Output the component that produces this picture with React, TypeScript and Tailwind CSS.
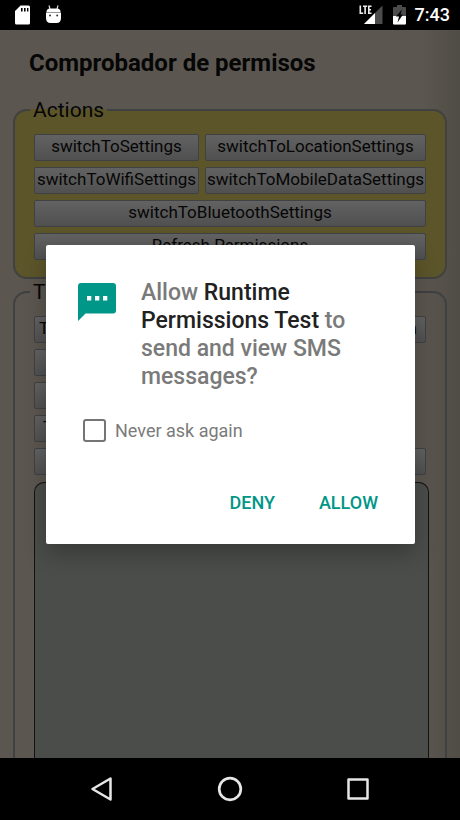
import type { ReactNode } from "react";

function PageButton({
  children,
  label,
  className = "justify-center",
}: {
  children?: ReactNode;
  label?: string;
  className?: string;
}) {
  return (
    <button
      type="button"
      aria-label={label}
      className={`flex h-[27px] items-center overflow-hidden whitespace-nowrap rounded-[2px] border border-[#404144] bg-linear-to-b from-[#626262] to-[#505050] pb-[3px] text-[17px] leading-5 ${className}`}
    >
      {children}
    </button>
  );
}

function StatusBar() {
  return (
    <header className="flex h-[30px] shrink-0 items-center justify-between bg-black pr-[10px] pl-[15px] text-white">
      <div className="flex items-center gap-4">
        <svg width="15" height="20" viewBox="0 0 15 20" aria-label="SD card">
          <path
            fill="#fff"
            fillRule="evenodd"
            d="M5.500 .500H13.500Q15 .500 15 2V18Q15 19.500 13.500 19.500H1.500Q0 19.500 0 18V6ZM6 3V6.500H7.600V3ZM9 3V6.500H10.600V3ZM12 3V6.500H13.400V3Z"
          />
        </svg>
        <svg width="15" height="20" viewBox="0 0 15 20" aria-label="Android">
          <path d="M3 .500L4 4M12 .500L11 4" stroke="#ddd" strokeWidth="1.200" />
          <path d="M.5 7Q.5 3.500 4 3.500H11Q14.500 3.500 14.500 7Z" fill="#fff" />
          <path d="M0 7.800H15V13Q15 18 10.500 18H4.500Q0 18 0 13Z" fill="#fff" />
          <path d="M.3 7.400H14.700" stroke="#bbb" strokeWidth=".8" />
          <circle cx="4" cy="10.500" r="1" fill="#333" />
          <circle cx="11.200" cy="10.500" r="1" fill="#333" />
        </svg>
      </div>
      <div className="flex items-center">
        <svg width="24" height="20" viewBox="0 0 24 20" aria-label="LTE signal" className="mr-[10px]">
          <path d="M23.500 .500V19H5Z" fill="#4b4b4b" />
          <path d="M16 8V19H5Z" fill="#fff" />
          <path d="M0 0H13V9.500H0Z" fill="#000" />
          <path d="M1.300 .500V8.300H4.200M4 1.300H8.200M6.100 1.300V9M12.500 1.300H9.800V8.300H12.500M9.800 4.700H12" fill="none" stroke="#eee" strokeWidth="1.600" />
        </svg>
        <svg width="13" height="20" viewBox="0 0 13 20" aria-label="Battery charging" className="mr-[9px]">
          <path d="M4 0H9V2H12Q13 2 13 3V18.500Q13 19.500 12 19.500H1Q0 19.500 0 18.500V3Q0 2 1 2H4Z" fill="#4b4b4b" />
          <path d="M0 11H13V18.500Q13 19.500 12 19.500H1Q0 19.500 0 18.500Z" fill="#fff" />
          <path d="M9 4.500L3 11.500H6L4.500 17.500L10 9.500H7.500Z" fill="#000" />
        </svg>
        <span className="text-[18px] leading-6 font-medium">7:43</span>
      </div>
    </header>
  );
}

function PermissionDialog() {
  return (
    <div
      role="dialog"
      aria-labelledby="permission-question"
      className="flex-1 rounded-[2px] bg-white pt-[34px] pr-[27px] pb-[17px] pl-8 shadow-[0_10px_22px_rgba(0,0,0,0.25)]"
    >
      <div className="flex gap-[25px]">
        <svg width="38" height="38" viewBox="0 0 38 38" className="mt-1 shrink-0" aria-hidden="true">
          <path d="M3 0H35Q38 0 38 3V27.500Q38 30.500 35 30.500H7.500L0 38V3Q0 0 3 0Z" fill="#009688" />
          <path d="M9 13h4.300v4.500H9ZM17 13h4.300v4.500H17ZM25 13h4.300v4.500H25Z" fill="#fff" />
        </svg>
        <p id="permission-question" className="text-[23px] leading-7 font-medium text-[#7a7a7a]">
          Allow <span className="text-[#212121]">Runtime Permissions Test</span> to send and view SMS messages?
        </p>
      </div>
      <label className="mt-[28px] ml-[5px] flex w-fit items-center gap-[9px] text-[18px] leading-6 text-[#7b7b7b]">
        <input
          type="checkbox"
          className="size-[23px] appearance-none rounded-[3px] border-2 border-[#757575] bg-white checked:bg-[#009688]"
        />
        Never ask again
      </label>
      <div className="mt-[36px] flex justify-end gap-6 text-[18px] leading-6 font-medium text-[#009688]">
        <button type="button" className="px-[10px] py-3">DENY</button>
        <button type="button" className="px-[10px] py-3">ALLOW</button>
      </div>
    </div>
  );
}

function NavigationBar() {
  return (
    <nav className="flex h-[62px] shrink-0 items-center justify-center gap-[98px] bg-black">
      <button type="button" aria-label="Back">
        <svg width="30" height="30" viewBox="0 0 30 30" fill="none" stroke="#e6e6e6" strokeWidth="2.500" strokeLinejoin="round">
          <path d="M23.500 4.500V25.500L5.500 15Z" />
        </svg>
      </button>
      <button type="button" aria-label="Home">
        <svg width="30" height="30" viewBox="0 0 30 30" fill="none" stroke="#e6e6e6" strokeWidth="2.700">
          <circle cx="15" cy="15" r="10.800" />
        </svg>
      </button>
      <button type="button" aria-label="Recent apps">
        <svg width="30" height="30" viewBox="0 0 30 30" fill="none" stroke="#e6e6e6" strokeWidth="2.500" strokeLinejoin="round">
          <path d="M5.500 5.500H24.500V24.500H5.500Z" />
        </svg>
      </button>
    </nav>
  );
}

export default function App() {
  return (
    <div className="flex h-screen flex-col overflow-hidden bg-black font-[Roboto,sans-serif]">
      <StatusBar />
      <main className="relative flex min-h-0 flex-1 flex-col bg-linear-to-r from-[#5b564f] from-92% to-[#504d46] px-[13px] pt-[17px] text-[#060606]">
        <h1 className="mb-[18px] px-4 text-[24px] leading-8 font-bold">Comprobador de permisos</h1>
        <fieldset className="rounded-[14px] border-2 border-[#404142] bg-[#5c552a] px-[19px] pb-[17px]">
          <legend className="-ml-1 px-[3px] text-[21px] leading-[26px]">Actions</legend>
          <div className="grid grid-cols-[165fr_221fr] gap-[6px] pt-[11px]">
            <PageButton>switchToSettings</PageButton>
            <PageButton>switchToLocationSettings</PageButton>
            <PageButton>switchToWifiSettings</PageButton>
            <PageButton>switchToMobileDataSettings</PageButton>
            <PageButton className="col-span-2 justify-center">switchToBluetoothSettings</PageButton>
            <PageButton className="col-span-2 justify-center">Refresh Permissions</PageButton>
          </div>
        </fieldset>
        <fieldset className="flex min-h-0 flex-1 flex-col rounded-t-[14px] border-2 border-b-0 border-[#404142] pr-4 pl-[19px]">
          <legend className="-ml-1 px-[3px] text-[21px] leading-[26px]">T</legend>
          <div className="mb-[7px] grid grid-cols-[165fr_221fr] gap-[6px] pt-[11px] pr-[3px]">
            <PageButton className="justify-start pl-1">T</PageButton>
            <PageButton className="justify-end pr-2">n</PageButton>
            <PageButton label="Camera" className="col-start-1" />
            <PageButton label="Contacts" className="col-start-1" />
            <PageButton className="col-start-1 justify-start pl-2">T</PageButton>
            <PageButton label="Clear" className="col-span-2" />
          </div>
          <textarea
            aria-label="Messages"
            className="block min-h-0 w-full flex-1 resize-none rounded-t-[10px] border border-b-0 border-[#111211] bg-[#4a4d49] p-2"
          />
        </fieldset>
        <div className="absolute inset-0 flex items-center pr-[45px] pl-[46px]">
          <PermissionDialog />
        </div>
      </main>
      <NavigationBar />
    </div>
  );
}
